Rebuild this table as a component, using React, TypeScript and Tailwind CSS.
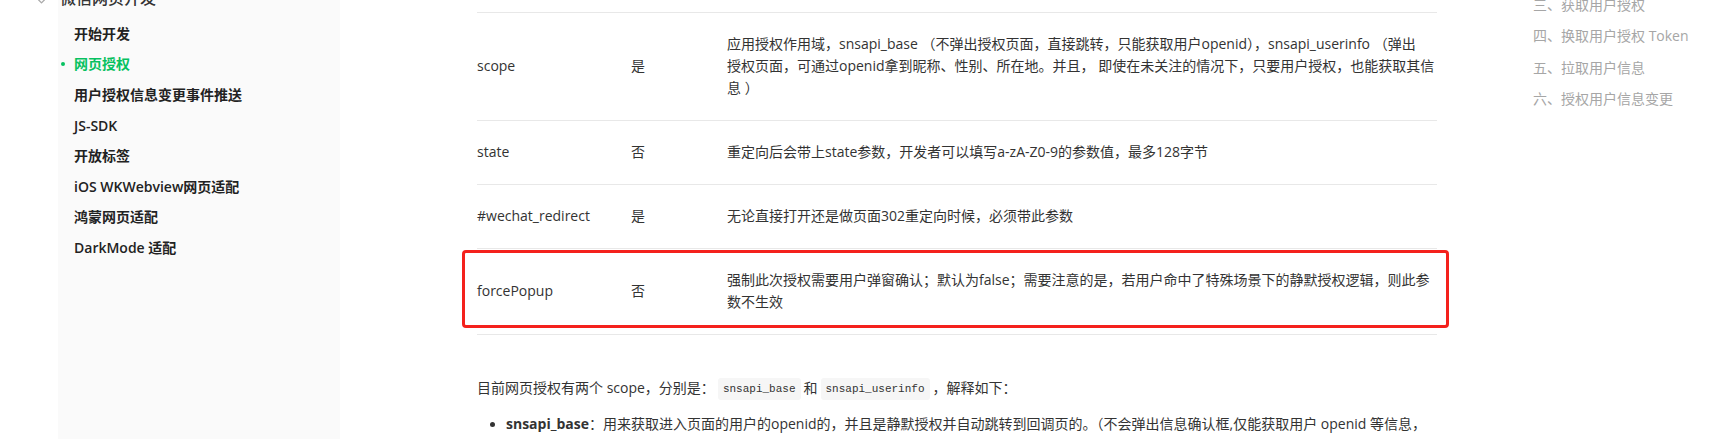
import React from 'react';
import { ChevronDown } from 'lucide-react';

const font = { fontFamily: '"Open Sans", "Noto Sans CJK SC", sans-serif' };

const navItems = [
  { label: '开始开发' },
  { label: '网页授权', active: true },
  { label: '用户授权信息变更事件推送' },
  { label: 'JS-SDK' },
  { label: '开放标签' },
  { label: 'iOS WKWebview网页适配' },
  { label: '鸿蒙网页适配' },
  { label: 'DarkMode 适配' },
];

const tocItems = ['三、获取用户授权', '四、换取用户授权 Token', '五、拉取用户信息', '六、授权用户信息变更'];

interface RowProps {
  name: string;
  required: string;
  desc: React.ReactNode;
  highlight?: boolean;
}

const Row: React.FC<RowProps> = ({ name, required, desc, highlight }) => {
  return (
    <div className="relative grid grid-cols-[154px_96px_1fr] items-center border-b border-[#e8e8e8] pt-[20px] pb-[21px] text-[14px] leading-[22px] text-[#333]">
      <div>{name}</div>
      <div>{required}</div>
      <div>{desc}</div>
      {highlight && (
        <div className="pointer-events-none absolute left-[-15px] right-[-12px] top-[1px] bottom-[6px] rounded-[4px] border-[3px] border-[#f4211c]" />
      )}
    </div>
  );
};

const Code: React.FC<{ children: React.ReactNode }> = ({ children }) => (
  <code
    className="mx-[3px] inline-block rounded-[3px] bg-[#f6f6f6] px-[5px] py-[4px] align-middle text-[11px] leading-[14px] text-[#333]"
    style={{ fontFamily: '"Liberation Mono", monospace' }}
  >
    {children}
  </code>
);

const App: React.FC = () => {
  return (
    <div className="flex h-[439px] w-[1720px] overflow-hidden bg-white" style={font}>
      <aside className="w-[340px] shrink-0 bg-[linear-gradient(to_right,#ffffff_58px,#fafafa_58px)]">
        <div className="-mt-[18px] mb-[4px] flex h-[32px] items-center pl-[36px] text-[16px] font-medium text-[#333]">
          <ChevronDown className="mt-[7px] h-[11px] w-[11px] text-[#aaa]" strokeWidth={3} />
          <span className="ml-[13px]">微信网页开发</span>
        </div>
        <ul>
          {navItems.map((item) => (
            <li
              key={item.label}
              className={
                item.active
                  ? 'relative flex h-[30.6px] items-center pl-[74px] text-[14px] font-semibold text-[#07c160]'
                  : 'flex h-[30.6px] items-center pl-[74px] text-[14px] font-semibold text-[#222]'
              }
            >
              {item.active && (
                <span className="absolute left-[61px] top-[13px] h-[4px] w-[4px] rounded-full bg-[#07c160]" />
              )}
              {item.label}
            </li>
          ))}
        </ul>
      </aside>

      <main className="w-[1097px] shrink-0 pl-[137px] pt-[12px]">
        <div className="w-[960px]">
          <div className="border-t border-[#e8e8e8]">
            <Row
              name="scope"
              required="是"
              desc={
                <>
                  应用授权作用域，snsapi_base （不弹出授权页面，直接跳转，只能获取用户openid），snsapi_userinfo （弹出
                  <br />
                  授权页面，可通过openid拿到昵称、性别、所在地。并且， 即使在未关注的情况下，只要用户授权，也能获取其信
                  <br />
                  息 ）
                </>
              }
            />
            <Row name="state" required="否" desc="重定向后会带上state参数，开发者可以填写a-zA-Z0-9的参数值，最多128字节" />
            <Row name="#wechat_redirect" required="是" desc="无论直接打开还是做页面302重定向时候，必须带此参数" />
            <Row
              name="forcePopup"
              required="否"
              desc="强制此次授权需要用户弹窗确认；默认为false；需要注意的是，若用户命中了特殊场景下的静默授权逻辑，则此参数不生效"
              highlight
            />
          </div>

          <p className="mt-[42px] text-[14px] leading-[22px] text-[#333]">
            目前网页授权有两个 scope，分别是：<Code>snsapi_base</Code>和<Code>snsapi_userinfo</Code>，解释如下：
          </p>

          <ul className="mt-[13px]">
            <li className="flex text-[14px] leading-[22px] text-[#333]">
              <span className="ml-[13px] mt-[9px] h-[5px] w-[5px] shrink-0 rounded-full bg-[#333]" />
              <span className="ml-[11px]">
                <b className="font-bold">snsapi_base</b>：用来获取进入页面的用户的openid的，并且是静默授权并自动跳转到回调页的。（不会弹出信息确认框,仅能获取用户 openid 等信息，无法获取用户昵称头像等）
              </span>
            </li>
          </ul>
        </div>
      </main>

      <nav className="pl-[96px]">
        <ul className="-mt-[11px]">
          {tocItems.map((t) => (
            <li key={t} className="flex h-[31.3px] items-center whitespace-nowrap text-[14px] text-[#a6a6a6]">
              {t}
            </li>
          ))}
        </ul>
      </nav>
    </div>
  );
};

export default App;
